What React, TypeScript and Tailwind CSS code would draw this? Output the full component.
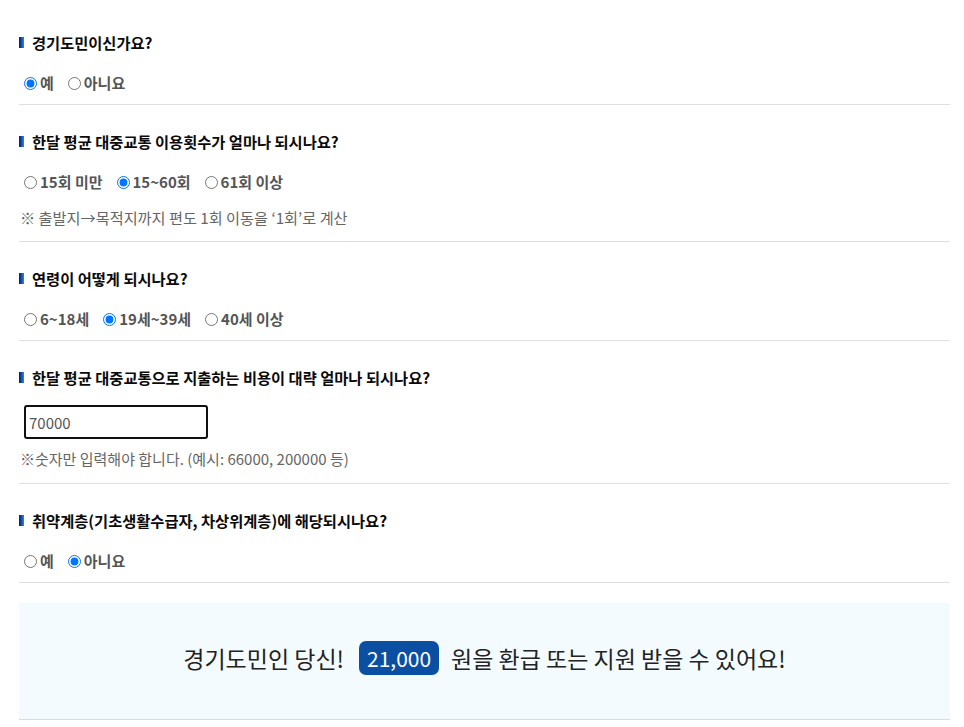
import { useState } from 'react';

const FONT = "font-['Noto_Sans_CJK_KR','Noto_Sans',sans-serif]";

function Heading({ children }: { children: React.ReactNode }) {
  return (
    <div className="flex h-[22px] items-center">
      <span className="mr-[8px] h-[11px] w-[5px] bg-gradient-to-r from-[#0b1a5c] to-[#1d8bff]" />
      <h3 className="text-[15.3px] leading-[22px] font-bold text-[#0a0a0a]">{children}</h3>
    </div>
  );
}

function RadioGroup({ name, options, initial }: { name: string; options: string[]; initial: number }) {
  const [value, setValue] = useState(initial);
  return (
    <div className="flex h-[20px] items-center">
      {options.map((opt, i) => (
        <label key={opt} className="mr-[9px] flex items-center text-[15px] leading-[20px] font-semibold text-[#555]">
          <input
            type="radio"
            name={name}
            checked={value === i}
            onChange={() => setValue(i)}
            className="mt-0 mr-[3px] ml-[5px] h-[13px] w-[13px]"
          />
          {opt}
        </label>
      ))}
    </div>
  );
}

export default function App() {
  const [amount, setAmount] = useState('70000');

  return (
    <div className={`${FONT} bg-white pt-[6px] pr-[14px] pl-[19px] min-h-[727px]`}>
      {/* 경기도민 */}
      <section className="border-b border-[#e0e0e0] pt-[25px] pb-[11px]">
        <Heading>경기도민이신가요?</Heading>
        <div className="mt-[20px]">
          <RadioGroup name="resident" options={['예', '아니요']} initial={0} />
        </div>
      </section>

      {/* 이용횟수 */}
      <section className="border-b border-[#e0e0e0] pt-[25px] pb-[13px]">
        <Heading>한달 평균 대중교통 이용횟수가 얼마나 되시나요?</Heading>
        <div className="mt-[20px]">
          <RadioGroup name="count" options={['15회 미만', '15~60회', '61회 이상']} initial={1} />
        </div>
        <p className="mt-[14px] pl-[1px] text-[15.2px] leading-[22px] text-[#666]">
          ※ 출발지→목적지까지 편도 1회 이동을 ‘1회’로 계산
        </p>
      </section>

      {/* 연령 */}
      <section className="border-b border-[#e0e0e0] pt-[25px] pb-[11px]">
        <Heading>연령이 어떻게 되시나요?</Heading>
        <div className="mt-[20px]">
          <RadioGroup name="age" options={['6~18세', '19세~39세', '40세 이상']} initial={1} />
        </div>
      </section>

      {/* 비용 */}
      <section className="border-b border-[#e0e0e0] pt-[25px] pb-[13px]">
        <Heading>한달 평균 대중교통으로 지출하는 비용이 대략 얼마나 되시나요?</Heading>
        <div className="mt-[17px] pl-[5px]">
          <input
            type="text"
            value={amount}
            onChange={(e) => setAmount(e.target.value)}
            className="h-[34px] w-[184px] rounded-[3px] border-2 border-[#111] px-[3px] text-[15px] text-[#555] outline-none"
          />
        </div>
        <p className="mt-[9px] pl-[1px] text-[15px] leading-[22px] text-[#666]">
          ※숫자만 입력해야 합니다. (예시: 66000, 200000 등)
        </p>
      </section>

      {/* 취약계층 */}
      <section className="border-b border-[#e0e0e0] pt-[25px] pb-[11px]">
        <Heading>취약계층(기초생활수급자, 차상위계층)에 해당되시나요?</Heading>
        <div className="mt-[20px]">
          <RadioGroup name="vulnerable" options={['예', '아니요']} initial={1} />
        </div>
      </section>

      {/* 결과 */}
      <div className="mt-[20px] flex items-center justify-center border-b border-[#dcdcdc] bg-[#f3fbff] pt-[38px] pb-[43px] text-[23px] text-[#222]">
        <span>경기도민인 당신!</span>
        <span className="mr-[12px] ml-[15px] flex h-[34px] items-center rounded-[7px] bg-[#0b4fa3] px-[8px] text-[21px] text-white">21,000</span>
        <span>원을 환급 또는 지원 받을 수 있어요!</span>
      </div>
    </div>
  );
}
